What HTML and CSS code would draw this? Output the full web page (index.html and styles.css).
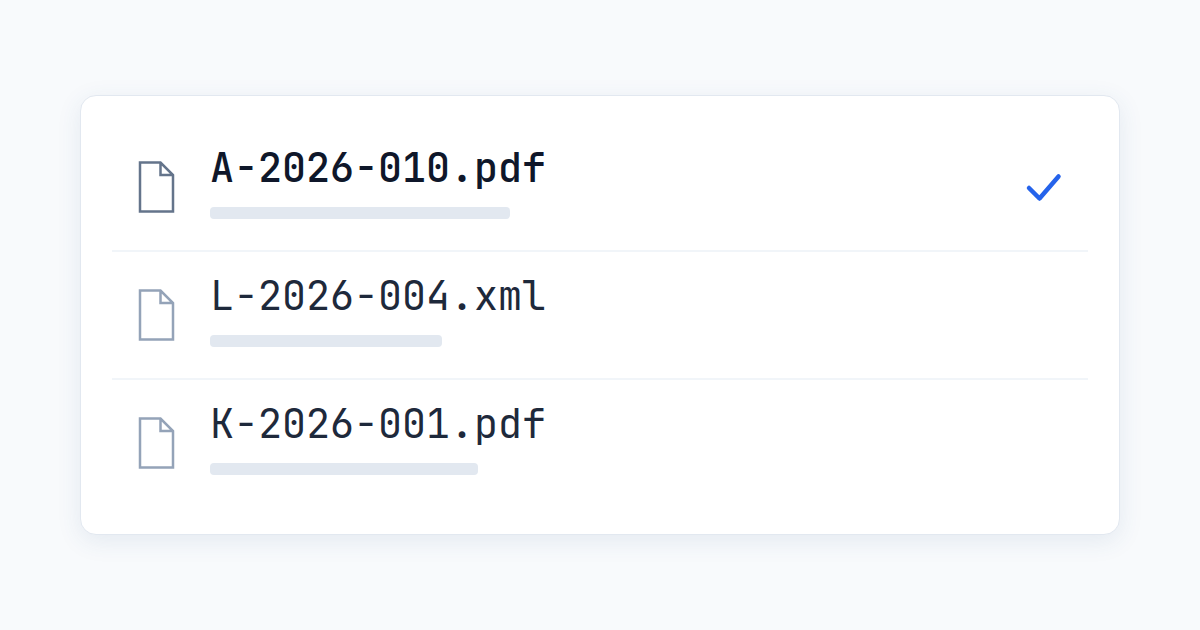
FILE: index.html
```
<!DOCTYPE html>
<html lang="en">
<head>
  <meta charset="UTF-8">
  <meta name="viewport" content="width=device-width, initial-scale=1">
  <title>Documents</title>
  <link rel="stylesheet" href="styles.css">
</head>
<body>
<ul class="files">
  <li class="file selected">
    <svg class="icon" viewBox="0 0 48 56" aria-hidden="true">
      <path d="M8 3.500H28.500L41 16V52.500H8ZM28.500 3.500V16H41"/>
    </svg>
    <div class="info">
      <div class="name">A-2026-010.pdf</div>
      <div class="bar" style="width: 300px"></div>
    </div>
    <svg class="check" viewBox="0 0 48 48" aria-hidden="true">
      <path d="M9 25L19.500 35.500L38.500 13.500"/>
    </svg>
  </li>
  <li class="file">
    <svg class="icon" viewBox="0 0 48 56" aria-hidden="true">
      <path d="M8 3.500H28.500L41 16V52.500H8ZM28.500 3.500V16H41"/>
    </svg>
    <div class="info">
      <div class="name">L-2026-004.xml</div>
      <div class="bar" style="width: 232px"></div>
    </div>
  </li>
  <li class="file">
    <svg class="icon" viewBox="0 0 48 56" aria-hidden="true">
      <path d="M8 3.500H28.500L41 16V52.500H8ZM28.500 3.500V16H41"/>
    </svg>
    <div class="info">
      <div class="name">K-2026-001.pdf</div>
      <div class="bar" style="width: 268px"></div>
    </div>
  </li>
</ul>
</body>
</html>
```
FILE: styles.css
```
* {
    box-sizing: border-box;
}

body {
    display: flex;
    align-items: center;
    min-height: 100vh;
    margin: 0;
    padding: 40px 80px;
    background: #f8fafc;
}

.files {
    flex: 1;
    margin: 0;
    padding: 28px 31px;
    list-style: none;
    background: #ffffff;
    border: 1px solid #e2e8f0;
    border-radius: 16px;
    box-shadow: 0 6px 24px rgba(51, 90, 135, 0.1);
}

.file {
    display: flex;
    align-items: center;
    padding: 23px 20px;
}

.file + .file {
    border-top: 2px solid #f1f5f9;
}

.icon {
    flex: none;
    width: 48px;
    height: 56px;
    margin-right: 30px;
    fill: none;
    stroke: #94a3b8;
    stroke-width: 2.5;
}

.selected .icon {
    stroke: #64748b;
}

.info {
    flex: 1;
    padding-bottom: 8px;
}

.name {
    margin-bottom: 18px;
    font-family: "JetBrains Mono", "DejaVu Sans Mono", monospace;
    font-size: 40px;
    font-weight: 400;
    line-height: 42px;
    color: #1e293b;
}

.selected .name {
    font-weight: 500;
    color: #0f172a;
}

.bar {
    height: 12px;
    border-radius: 4px;
    background: #e2e8f0;
}

.check {
    flex: none;
    width: 48px;
    height: 48px;
    fill: none;
    stroke: #2563eb;
    stroke-width: 4.5;
    stroke-linecap: round;
    stroke-linejoin: round;
}
```
